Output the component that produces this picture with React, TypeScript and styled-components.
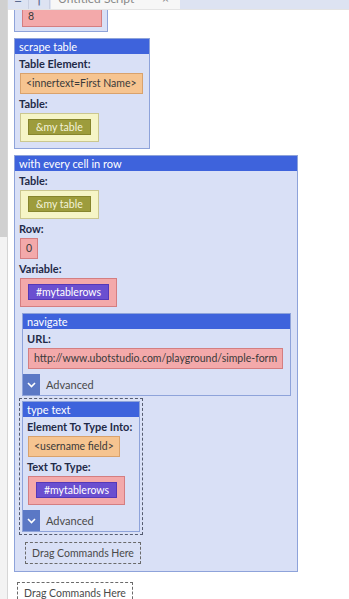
import { FC, ReactNode } from 'react';
import styled, { createGlobalStyle } from 'styled-components';

const GlobalStyle = createGlobalStyle`
  html, body {
    margin: 0;
    padding: 0;
    background: #ffffff;
  }
  body {
    font-family: Lato, 'Noto Sans', sans-serif;
    font-size: 10.5px;
    color: #333;
  }
`;

const Page = styled.div`
  display: flex;
  width: 349px;
  height: 599px;
  overflow: hidden;
`;

const ScrollTrack = styled.div`
  width: 7px;
  flex: none;
  background: #f3f3f3;
  border-right: 1px solid #d6d6d6;
  display: flex;
  flex-direction: column;
`;

const ScrollThumb = styled.div`
  height: 237px;
  background: #d0d0d0;
`;

const Main = styled.div`
  flex: 1;
  display: flex;
  flex-direction: column;
  min-width: 0;
`;

const TabBar = styled.div`
  height: 9px;
  flex: none;
  display: flex;
  align-items: flex-end;
  overflow: hidden;
  background: #dde3f2;
  border-bottom: 1px solid #e4e4e4;
  position: relative;
  z-index: 1;
`;

const ToolIcon = styled.div`
  width: 20px;
  height: 22px;
  flex: none;
  display: flex;
  align-items: center;
  justify-content: center;
  color: #5a6a90;
  font-size: 14px;
  border-right: 1px solid #c9d0e2;
`;

const Tab = styled.div`
  margin-left: 1px;
  width: 129px;
  height: 22px;
  flex: none;
  display: flex;
  align-items: center;
  justify-content: space-between;
  padding: 0 11px 0 7px;
  box-sizing: border-box;
  background: #f7f7f7;
  color: #888;
  font-size: 12px;
`;

const Canvas = styled.div`
  flex: 1;
  overflow: hidden;
  display: flex;
  flex-direction: column;
  align-items: flex-start;
  gap: 6px;
  padding-left: 6px;
`;

const Block = styled.div<{ $width?: number }>`
  display: flex;
  flex-direction: column;
  align-items: stretch;
  background: #d9e0f6;
  border: 1px solid #8ea3da;
  width: ${(p) => (p.$width ? p.$width + 'px' : 'fit-content')};
  box-sizing: border-box;
  flex: none;
`;

const PartialBlock = styled(Block)`
  margin-top: -6px;
  border-top: none;
  padding: 0 5px 4px 6px;
`;

const Header = styled.div`
  background: #3e63dc;
  color: #ffffff;
  font-size: 11px;
  height: 15px;
  line-height: 15px;
  padding: 0 4px;
  white-space: nowrap;
`;

const Body = styled.div<{ $flush?: boolean; $bottom?: number }>`
  display: flex;
  flex-direction: column;
  align-items: flex-start;
  padding: ${(p) => (p.$flush ? '0 7px 0 0' : `0 6px ${p.$bottom ?? 5}px 4px`)};
`;

const Fields = styled.div`
  display: flex;
  flex-direction: column;
  align-items: flex-start;
  padding-left: 4px;
`;

const Label = styled.div`
  font-weight: 700;
  color: #1f2a48;
  font-size: 11px;
  line-height: 14px;
  margin-top: 3px;
  white-space: nowrap;
`;

type Tone = 'orange' | 'red' | 'yellow';

const tones: Record<Tone, { bg: string; border: string }> = {
  orange: { bg: '#f6c490', border: '#d9a26c' },
  red: { bg: '#f3a9aa', border: '#d47e81' },
  yellow: { bg: '#f6f5c6', border: '#cbc78f' },
};

const ValueBox = styled.div<{ $tone: Tone; $framed?: boolean }>`
  margin: 2px 0 0 1px;
  background: ${(p) => tones[p.$tone].bg};
  border: 1px solid ${(p) => tones[p.$tone].border};
  color: #3a3a3a;
  white-space: nowrap;
  line-height: 19px;
  padding: ${(p) => (p.$framed ? '5px 7px 6px' : '0 5px')};
`;

const Chip = styled.div<{ $kind: 'table' | 'var' }>`
  background: ${(p) => (p.$kind === 'table' ? '#9d9c3c' : '#6a4fd0')};
  border: 1px solid ${(p) => (p.$kind === 'table' ? '#86852c' : '#5438b8')};
  color: ${(p) => (p.$kind === 'table' ? '#f4f3d8' : '#ffffff')};
  line-height: 14px;
  padding: 0 7px;
`;

const Nested = styled.div`
  margin: 6px 0 0 3px;
  align-self: stretch;
  display: flex;
  flex-direction: column;
  align-items: flex-start;
`;

const Selected = styled.div`
  border: 1px dashed #555c70;
  padding: 2px;
  margin-top: 2px;
  margin-left: -3px;
`;

const AdvancedRow = styled.div`
  display: flex;
  align-items: center;
  gap: 6px;
  height: 21px;
  color: #4a4a4a;
  font-size: 11px;
  margin-top: 5px;
`;

const Chevron = styled.div`
  width: 17px;
  height: 21px;
  background: #5b78c5;
  display: flex;
  align-items: center;
  justify-content: center;
`;

const DropZone = styled.div<{ $indent?: number; $top?: number }>`
  border: 1px dashed #6a6a6a;
  color: #4a4a4a;
  font-size: 10.5px;
  width: 116px;
  height: 22px;
  box-sizing: border-box;
  display: flex;
  align-items: center;
  justify-content: center;
  white-space: nowrap;
  flex: none;
  margin-left: ${(p) => p.$indent ?? 0}px;
  margin-top: ${(p) => p.$top ?? 0}px;
`;

const Advanced: FC = () => (
  <AdvancedRow>
    <Chevron>
      <svg width='9' height='6' viewBox='0 0 9 6'>
        <path d='M1 1 L4.5 4.5 L8 1' stroke='#fff' strokeWidth='1.6' fill='none' />
      </svg>
    </Chevron>
    Advanced
  </AdvancedRow>
);

const TableValue: FC = () => (
  <ValueBox $tone='yellow' $framed>
    <Chip $kind='table'>&amp;my table</Chip>
  </ValueBox>
);

const VarValue: FC = () => (
  <ValueBox $tone='red' $framed>
    <Chip $kind='var'>#mytablerows</Chip>
  </ValueBox>
);

const Command: FC<{ title: string; children: ReactNode; stretch?: boolean }> = ({
  title,
  children,
  stretch,
}) => (
  <Block style={stretch ? { alignSelf: 'stretch', width: 'auto' } : undefined}>
    <Header>{title}</Header>
    <Body $flush>
      <Fields>{children}</Fields>
      <Advanced />
    </Body>
  </Block>
);

export default function App() {
  return (
    <>
      <GlobalStyle />
      <Page>
        <ScrollTrack>
          <ScrollThumb />
        </ScrollTrack>
        <Main>
          <TabBar>
            <ToolIcon>≡</ToolIcon>
            <ToolIcon>↑</ToolIcon>
            <Tab>
              <span>Untitled Script</span>
              <span>×</span>
            </Tab>
          </TabBar>
          <Canvas>
            <PartialBlock $width={94}>
              <ValueBox $tone='red'>8</ValueBox>
            </PartialBlock>

            <Block>
              <Header>scrape table</Header>
              <Body $bottom={6}>
                <Label>Table Element:</Label>
                <ValueBox $tone='orange'>&lt;innertext=First Name&gt;</ValueBox>
                <Label>Table:</Label>
                <TableValue />
              </Body>
            </Block>

            <Block>
              <Header>with every cell in row</Header>
              <Body $bottom={7}>
                <Label>Table:</Label>
                <TableValue />
                <Label>Row:</Label>
                <ValueBox $tone='red'>0</ValueBox>
                <Label>Variable:</Label>
                <VarValue />
                <Nested>
                  <Command title='navigate' stretch>
                    <Label>URL:</Label>
                    <ValueBox $tone='red'>http://www.ubotstudio.com/playground/simple-form</ValueBox>
                  </Command>
                  <Selected>
                    <Command title='type text'>
                      <Label>Element To Type Into:</Label>
                      <ValueBox $tone='orange'>&lt;username field&gt;</ValueBox>
                      <Label>Text To Type:</Label>
                      <VarValue />
                    </Command>
                  </Selected>
                  <DropZone $indent={3} $top={7}>
                    Drag Commands Here
                  </DropZone>
                </Nested>
              </Body>
            </Block>

            <DropZone $indent={3} $top={4}>
              Drag Commands Here
            </DropZone>
          </Canvas>
        </Main>
      </Page>
    </>
  );
}
